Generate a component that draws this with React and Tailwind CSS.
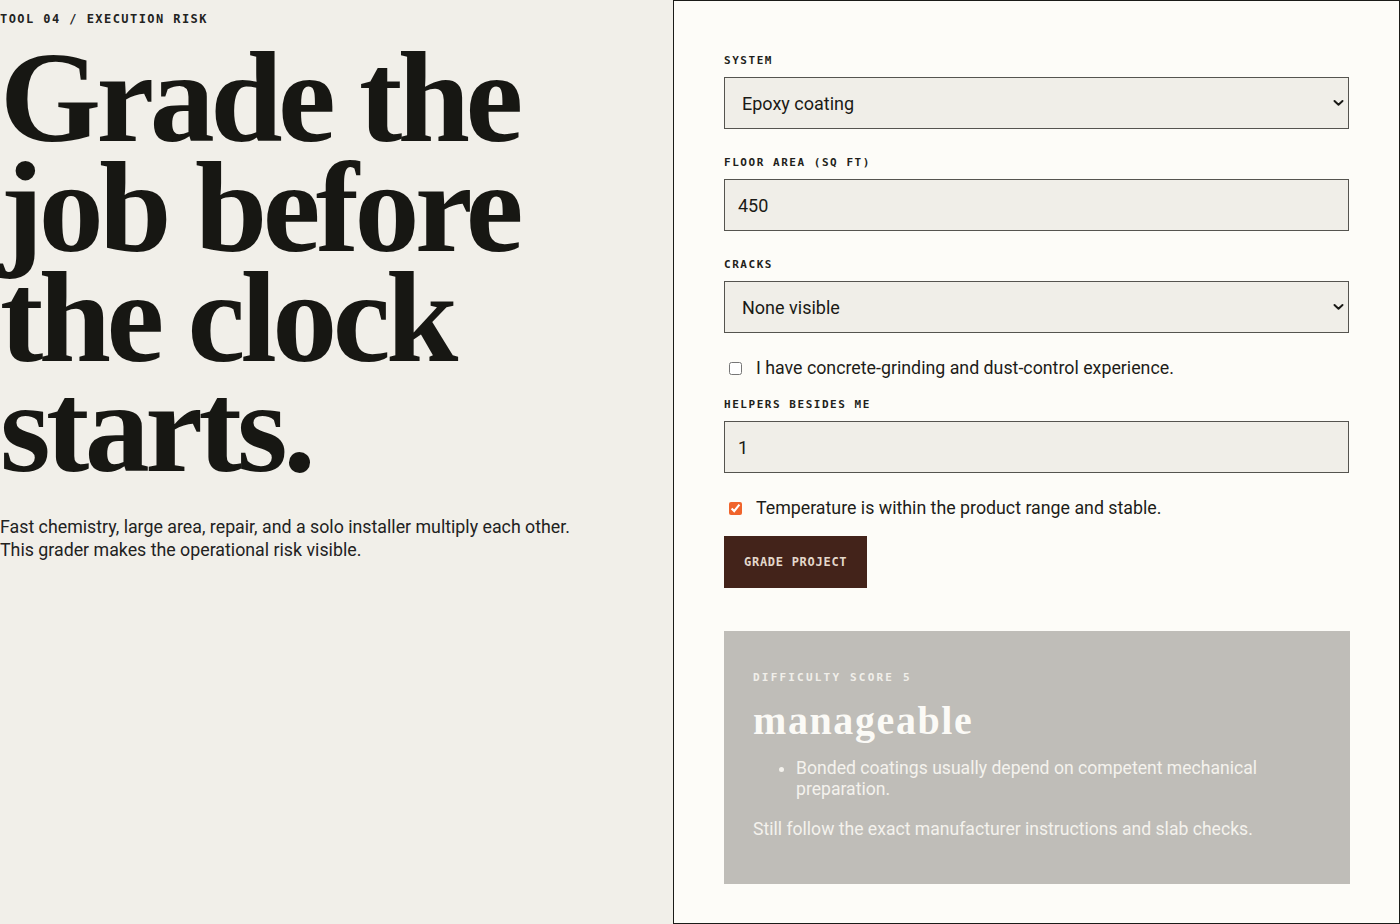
import React from "react";

const mono = { fontFamily: '"DejaVu Sans Mono", "Liberation Mono", monospace' };

function Chevron() {
  return (
    <svg width="11" height="7" viewBox="0 0 11 7" className="absolute right-[5px] top-1/2 -translate-y-1/2 pointer-events-none">
      <path d="M1.5 1.5 L5.5 5.2 L9.5 1.5" fill="none" stroke="#1a1a16" strokeWidth="2" strokeLinecap="round" strokeLinejoin="round" />
    </svg>
  );
}

function Label({ children, className = "" }) {
  return (
    <div
      className={`text-[11px] leading-4 h-4 pt-[1px] font-bold tracking-[0.14em] uppercase text-[#1f1f1b] ${className}`}
      style={mono}
    >
      {children}
    </div>
  );
}

function SelectBox({ value }) {
  return (
    <div className="relative mt-[9px]">
      <select
        defaultValue={value}
        className="appearance-none w-full h-[52px] border border-[#55544f] bg-[#f0eee8] pl-[17px] pr-8 text-[18px] text-[#1a1a16] outline-none"
        style={{ fontFamily: 'Roboto, "Noto Sans", sans-serif' }}
      >
        <option>{value}</option>
      </select>
      <Chevron />
    </div>
  );
}

function InputBox({ value }) {
  return (
    <input
      defaultValue={value}
      className="mt-[9px] w-full h-[52px] border border-[#55544f] bg-[#f0eee8] pl-[13px] text-[18px] text-[#1a1a16] outline-none"
      style={{ fontFamily: 'Roboto, "Noto Sans", sans-serif' }}
    />
  );
}

function Check({ checked, children, className = "" }) {
  return (
    <label className={`flex items-center h-6 text-[17.8px] text-[#1d1d19] ${className}`}>
      <input
        type="checkbox"
        defaultChecked={checked}
        className="w-[13px] h-[13px] ml-[5px] mr-[14px] accent-[#f0642c]"
      />
      <span>{children}</span>
    </label>
  );
}

export default function App() {
  return (
    <div
      className="w-[1400px] h-[924px] flex bg-[#f1efe9] overflow-hidden"
      style={{ fontFamily: 'Roboto, "Noto Sans", sans-serif' }}
    >
      <div className="flex-1 flex flex-col">
        <div
          className="mt-[12px] text-[12px] leading-[14px] font-bold tracking-[0.12em] text-[#23231f]"
          style={mono}
        >
          TOOL 04 / EXECUTION RISK
        </div>
        <h1
          className="mt-[16px] text-[130px] leading-[110px] font-bold tracking-[-0.035em] text-[#171713]"
          style={{ fontFamily: '"Liberation Serif", "Times New Roman", serif' }}
        >
          Grade the
          <br />
          job before
          <br />
          the clock
          <br />
          starts.
        </h1>
        <p className="mt-[33px] text-[17.8px] leading-[23px] text-[#22221e]">
          Fast chemistry, large area, repair, and a solo installer multiply each other.
          <br />
          This grader makes the operational risk visible.
        </p>
      </div>

      <div className="w-[727px] h-[924px] border border-[#1b1b18] bg-[#fdfcf8] pl-[50px] pr-[50px] pt-[51px] flex flex-col">
        <Label>System</Label>
        <SelectBox value="Epoxy coating" />

        <Label className="mt-[25px]">Floor area (sq ft)</Label>
        <InputBox value="450" />

        <Label className="mt-[25px]">Cracks</Label>
        <SelectBox value="None visible" />

        <Check className="mt-[23px]">I have concrete-grinding and dust-control experience.</Check>

        <Label className="mt-[16px]">Helpers besides me</Label>
        <InputBox value="1" />

        <Check checked className="mt-[23px]">
          Temperature is within the product range and stable.
        </Check>

        <button
          className="mt-[16px] self-start h-[52px] px-5 bg-[#43231a] text-[#e4d8cb] text-[12px] font-bold tracking-[0.06em]"
          style={mono}
        >
          GRADE PROJECT
        </button>

        <div className="mt-[43px] w-[626px] h-[253px] bg-[#bfbdb8] pl-[29px] pt-[40px]">
          <div
            className="text-[11px] leading-[14px] font-bold tracking-[0.2em] text-[#f1efea]"
            style={mono}
          >
            DIFFICULTY SCORE 5
          </div>
          <div
            className="mt-[14px] text-[40px] leading-[44px] font-bold tracking-[0.04em] text-[#fbfaf6]"
            style={{ fontFamily: '"Liberation Serif", "Times New Roman", serif' }}
          >
            manageable
          </div>
          <ul className="mt-[15px] ml-[43px] list-disc text-[17.6px] leading-[21px] text-[#f4f2ed] marker:text-[#f4f2ed] w-[480px]">
            <li>Bonded coatings usually depend on competent mechanical preparation.</li>
          </ul>
          <p className="mt-[19px] text-[17.6px] leading-[21px] text-[#f4f2ed]">
            Still follow the exact manufacturer instructions and slab checks.
          </p>
        </div>
      </div>
    </div>
  );
}
